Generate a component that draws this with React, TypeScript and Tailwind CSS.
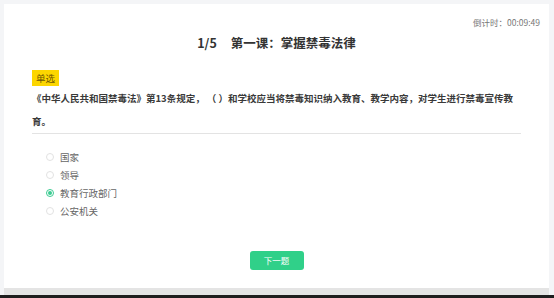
import { useState } from 'react';

const options = ['国家', '领导', '教育行政部门', '公安机关'];

export default function App() {
  const [picked, setPicked] = useState(2);

  return (
    <div className="w-[554px] h-[298px] flex flex-col bg-[#f4f5f7] font-['Noto_Sans_CJK_SC','Noto_Sans',sans-serif]">
      <div className="flex-1 flex flex-col pt-[4px] pl-[4px] pr-[5px]">
        <div className="flex-1 flex flex-col bg-white">
          <div className="flex justify-end pt-[12px] pr-[9px] text-[8.5px] leading-[12px] text-[#777]">
            倒计时：00:09:49
          </div>
          <h1 className="mt-[6px] text-center text-[12.5px] leading-[18px] font-bold text-[#333]">
            1/5<span className="inline-block w-[14px]" />第一课：掌握禁毒法律
          </h1>

          <div className="px-[28px]">
            <span className="mt-[18px] inline-block h-[16px] px-[4px] bg-[#fcd600] text-[9.5px] leading-[16px] text-[#6e5500]">
              单选
            </span>
            <p className="text-[9.5px] leading-[23px] font-semibold text-[#3a3a3a] border-b border-[#e3e3e3]">
              《中华人民共和国禁毒法》第13条规定， （ ）和学校应当将禁毒知识纳入教育、教学内容，对学生进行禁毒宣传教育。
            </p>

            <ul className="pt-[14px] pl-[14px]">
              {options.map((o, i) => (
                <li
                  key={o}
                  onClick={() => setPicked(i)}
                  className="flex items-center h-[18px] gap-[6px] text-[9.5px] text-[#666] cursor-pointer"
                >
                  {picked === i ? (
                    <span className="flex items-center justify-center w-[8px] h-[8px] rounded-full border border-[#3ccb92]">
                      <span className="w-[4px] h-[4px] rounded-full bg-[#3ccb92]" />
                    </span>
                  ) : (
                    <span className="w-[8px] h-[8px] rounded-full border border-[#e2e2e2]" />
                  )}
                  {o}
                </li>
              ))}
            </ul>

            <div className="flex justify-center mt-[31px]">
              <button className="w-[54px] h-[19px] rounded-[3px] bg-[#30d089] text-white text-[8.5px] leading-[19px]">
                下一题
              </button>
            </div>
          </div>
        </div>
        <div className="h-[7px] bg-[#e4e4e4]" />
      </div>
      <div className="h-[3px] bg-[#1e1e1e]" />
    </div>
  );
}
